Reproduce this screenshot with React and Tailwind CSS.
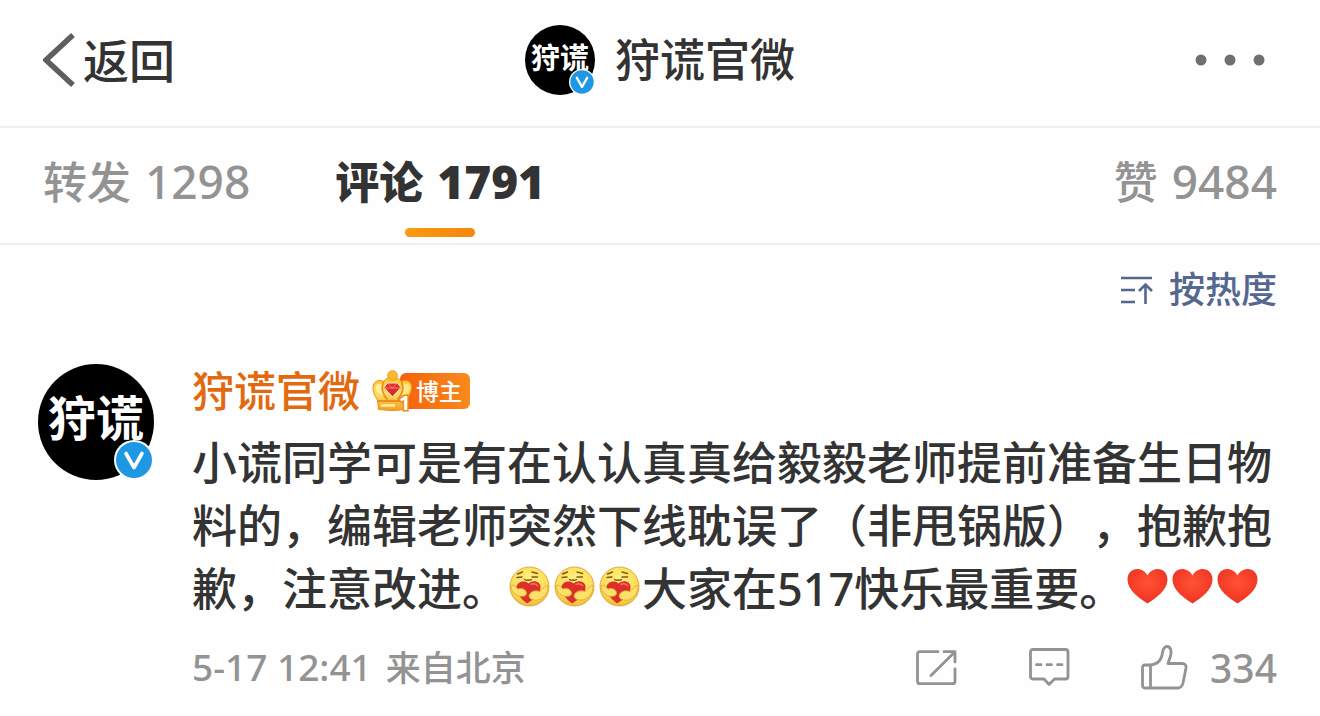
import { useState } from "react";

const sans = "font-['Noto_Sans','Noto_Sans_CJK_SC',sans-serif]";

function BackIcon() {
  return (
    <svg width="32" height="54" viewBox="0 0 32 54" fill="none" aria-hidden="true">
      <path d="M30 2 3 27l27 25" stroke="#5e5e5e" strokeWidth="5.500" />
    </svg>
  );
}

function MoreIcon() {
  return (
    <svg width="70" height="12" viewBox="0 0 70 12" fill="#6f6f6f" aria-hidden="true">
      <circle cx="6" cy="6" r="5.5" />
      <circle cx="35" cy="6" r="5.5" />
      <circle cx="64" cy="6" r="5.5" />
    </svg>
  );
}

function SortIcon() {
  return (
    <svg width="32" height="30" viewBox="0 0 32 30" fill="none" stroke="#53678f" strokeWidth="2.6" aria-hidden="true">
      <path d="M0 3h31M0 15h14M0 27h14M24.500 29V9.500M18 16l6.500-6.500L31 16" />
    </svg>
  );
}

function VerifiedIcon({ className }) {
  return (
    <svg viewBox="0 0 40 40" className={className} aria-hidden="true">
      <circle cx="20" cy="20" r="20" fill="#fff" />
      <circle cx="20" cy="20" r="18" fill="#1f98e4" />
      <path d="m12 13.500 8 14 8-14" fill="none" stroke="#fff" strokeWidth="3.600" strokeLinecap="round" strokeLinejoin="round" />
    </svg>
  );
}

function CrownIcon() {
  return (
    <svg width="40" height="42" viewBox="0 0 40 42" className="relative z-10 shrink-0 overflow-visible" aria-hidden="true">
      <defs>
        <linearGradient id="crown" x1="0" y1="0" x2="0" y2="1">
          <stop offset="0" stopColor="#ffc02e" />
          <stop offset="0.500" stopColor="#ffdc62" />
          <stop offset="1" stopColor="#f7a01c" />
        </linearGradient>
      </defs>
      <path
        d="M6.500 39.500 5.500 30C2 25 0 20 1.500 15c1-4 6-6 10-3.500C14 8 17 7.500 20.500 7.500S27 8 29.500 11.500c4-2.500 9-.5 10 3.500.5 4-1 8-4.500 15l-1 9.500q-13.500 2-27.500 0Z"
        fill="url(#crown)"
        stroke="#e8901c"
      />
      <path d="M11.500 11.500c-3 7-1 13 4 18M29.500 11.500c3 7 1 13-4 18M6 31h27" fill="none" stroke="#e98f1f" strokeWidth="1.800" />
      <path d="M3.500 18c0-4 4-5 6-3.500-1 4 0 8 2 11-4-1-7.500-4-8-7.500Z" fill="#fff0a0" />
      <path d="M37.500 18c0-4-4-5-6-3.500 1 4 0 8-2 11 4-1 7.500-4 8-7.500Z" fill="#ffe88a" />
      <circle cx="20.500" cy="5.500" r="4.800" fill="#ffb92a" stroke="#ee9c25" />
      <path d="M15.500 13h10l3.500 4.500-8.500 9.500-8.500-9.500Z" fill="#dc2d2d" stroke="#fff0c0" />
      <path d="m15.500 13 5 5 5-5M12.500 18h16" fill="none" stroke="#ff8a80" strokeWidth="0.800" />
      <path d="M9 35.500h14" stroke="#fff0a0" strokeWidth="2.500" />
      <text x="27" y="40" fontSize="20" fontWeight="700" fill="#fff" stroke="#ef8a1c" strokeWidth="3" paintOrder="stroke">1</text>
    </svg>
  );
}

function HugFace() {
  return (
    <svg viewBox="0 0 45 45" className="inline-block size-[45px] align-[-3px]" role="img" aria-label="抱抱">
      <defs>
        <radialGradient id="face" cx="0.5" cy="0.35" r="0.7">
          <stop offset="0" stopColor="#fff283" />
          <stop offset="0.700" stopColor="#fbdb52" />
          <stop offset="1" stopColor="#ecad30" />
        </radialGradient>
      </defs>
      <circle cx="22.500" cy="22.500" r="19.500" fill="url(#face)" stroke="#d69a30" strokeWidth="0.800" />
      <path d="m10.500 10 5-2M10 13.500l5-.5M25 8l5.500 1.500M25 13h5.500M17.500 15.500q2 1.500 3.500.3 1.500 1 3.500-.3" fill="none" stroke="#87551c" strokeWidth="1.400" strokeLinecap="round" />
      <path d="M20 39.500C15 36 11 31 9.500 25c-1-7 8-9.500 12-5.500 4-4 12.500-2.500 12 4C33.500 31 26 36 20 39.500Z" fill="#dd2f28" />
      <path d="M23.500 20.500q5-2 7.500 1.500" fill="none" stroke="#f47763" strokeWidth="1.500" />
      <path d="M4 22c3-2.500 4.500 1 7 3 4-1.500 8 .5 8.500 3.500.5 3.500-3.500 4.500-7.500 3.500C7.500 30.500 4 27 4 22Z" fill="#fce067" stroke="#e0a436" strokeWidth="0.800" />
      <path d="M41 21.500c-3 0-5 3.500-8 6-5-2-10 .5-11 4 0 4 4.500 5 9 4.500 6-2 10.500-7 10-14.500Z" fill="#fce067" stroke="#e0a436" strokeWidth="0.800" />
    </svg>
  );
}

function Heart() {
  return (
    <svg viewBox="0 0 45 45" className="inline-block size-[45px] align-[-3px]" role="img" aria-label="心">
      <defs>
        <radialGradient id="heart" cx="0.5" cy="0.4" r="0.65">
          <stop offset="0" stopColor="#ff5335" />
          <stop offset="0.700" stopColor="#f43a25" />
          <stop offset="1" stopColor="#d5382e" />
        </radialGradient>
      </defs>
      <path d="M23.500 39.500C15 34 3.500 26 3.500 15.500 3.500 3 18.500 1.500 23.500 11.500 28.500 1.500 43.500 3 43.500 15.500c0 10.500-11.500 18.500-20 24Z" fill="url(#heart)" />
    </svg>
  );
}

function ShareIcon() {
  return (
    <svg width="42" height="36" viewBox="0 0 42 36" fill="none" stroke="#939393" strokeWidth="2.800" strokeLinecap="round" strokeLinejoin="round" aria-hidden="true">
      <path d="M22 1.700H4q-2.500 0-2.500 2.500v27q0 2.500 2.500 2.500h32.500q2.500 0 2.500-2.500V19M28 1.700h11V12M39 1.700 15 25.500" />
    </svg>
  );
}

function CommentIcon() {
  return (
    <svg width="41" height="39" viewBox="0 0 41 39" fill="none" stroke="#939393" strokeWidth="2.800" strokeLinecap="round" strokeLinejoin="round" aria-hidden="true">
      <path d="M4 1.500h32.500q2.500 0 2.500 2.500v24.500q0 2.500-2.500 2.500h-11L20 36.500 15 31H4q-2.500 0-2.500-2.500V4Q1.500 1.500 4 1.500ZM7.500 16.700H12M18 16.700h4.500M28.500 16.700H33" />
    </svg>
  );
}

function LikeIcon() {
  return (
    <svg width="47" height="45" viewBox="0 0 47 45" fill="none" stroke="#939393" strokeWidth="2.800" strokeLinecap="round" strokeLinejoin="round" aria-hidden="true">
      <path d="M9.500 20H4q-2.500 0-2.500 2.500V40q0 3 2.500 3h5.500ZM9.500 20c6-.5 9.500-3.500 11-8 1.500-4 .5-10 5-10.500 4-.3 5 4 4.300 8-.5 3.500-2 5.500-2.800 9H41q4.500 0 4 4.500L42 38q-1.200 5-5.500 5h-27" />
    </svg>
  );
}

function Avatar({ large }) {
  return (
    <span
      className={
        large
          ? "relative flex size-[116px] shrink-0 items-center justify-center rounded-full bg-black pb-2 text-5xl font-bold text-white"
          : "relative flex size-[70px] shrink-0 items-center justify-center rounded-full bg-black pb-1 text-[29px] font-bold text-white"
      }
    >
      <span className="whitespace-nowrap">狩谎</span>
      <VerifiedIcon className={large ? "absolute right-0 bottom-0 size-10" : "absolute right-0 bottom-0 size-[26px]"} />
    </span>
  );
}

const tabs = [
  { id: "repost", label: "转发", count: 1298 },
  { id: "comment", label: "评论", count: 1791 },
  { id: "like", label: "赞", count: 9484 },
];

export default function App() {
  const [active, setActive] = useState("comment");

  return (
    <div className={`min-h-screen bg-[#fefefe] font-medium text-[#333] ${sans}`}>
      <header className="grid grid-cols-[1fr_auto_1fr] items-center border-b-2 border-[#eee] px-[43px] pt-[25px] pb-[31px]">
        <button type="button" className="flex items-center gap-2 justify-self-start text-[46px] leading-[60px]">
          <BackIcon />
          返回
        </button>
        <a href="#profile" className="flex items-center gap-5 text-[45px] leading-[64px]">
          <Avatar />
          狩谎官微
        </a>
        <button type="button" aria-label="更多" className="justify-self-end px-3 py-4">
          <MoreIcon />
        </button>
      </header>

      <nav className="flex gap-[85px] border-b-2 border-[#eee] px-[43px] pt-[21px] text-[44px] leading-[64px]">
        {tabs.map((t) => (
          <button
            key={t.id}
            type="button"
            onClick={() => setActive(t.id)}
            className={`flex flex-col items-center gap-[14px] pb-[6px] last:ml-auto ${active === t.id ? "font-black" : "text-[#939393]"}`}
          >
            <span className="flex items-baseline gap-[14px]">
              {t.label}
              <span className="text-[46px]">{t.count}</span>
            </span>
            <span className={`h-[9px] w-[70px] rounded-full ${active === t.id ? "bg-linear-to-r from-[#fb9a0c] to-[#f5860f]" : ""}`} />
          </button>
        ))}
      </nav>

      <main className="pr-[43px] pb-5 pl-[38px]">
        <div className="flex justify-end pt-[21px]">
          <button type="button" className="flex items-center gap-4 text-4xl leading-[48px] text-[#53678f]">
            <SortIcon />
            按热度
          </button>
        </div>

        <article className="mt-[50px] flex gap-[38px]">
          <div>
            <Avatar large />
          </div>
          <div className="min-w-0 flex-1">
            <div className="flex items-center gap-3 leading-[54px]">
              <a href="#profile" className="text-[42px] text-[#e3690f]">狩谎官微</a>
              <span className="flex items-center">
                <CrownIcon />
                <span className="-ml-3 h-9 rounded-md bg-linear-to-r from-[#f5600a] to-[#f98a1c] pr-2 pl-4 text-[23px] leading-9 text-white">
                  博主
                </span>
              </span>
            </div>

            <p className="mt-[13px] text-[45px] leading-[63px] [text-spacing-trim:space-all]">
              小谎同学可是有在认认真真给毅毅老师提前准备生日物料的，编辑老师突然下线耽误了（非甩锅版），抱歉抱歉，注意改进。
              <HugFace />
              <HugFace />
              <HugFace />
              大家在517快乐最重要。
              <Heart />
              <Heart />
              <Heart />
            </p>

            <footer className="mt-[23px] flex items-center justify-between leading-[48px] text-[#939393]">
              <span className="flex items-baseline gap-[14px] text-[35px]">
                <time className="text-[37px]">5-17 12:41</time>
                来自北京
              </span>
              <div className="flex items-center gap-[71px]">
                <button type="button" aria-label="转发">
                  <ShareIcon />
                </button>
                <button type="button" aria-label="评论">
                  <CommentIcon />
                </button>
                <button type="button" className="flex items-center gap-[22px] text-[39px]">
                  <LikeIcon />
                  334
                </button>
              </div>
            </footer>
          </div>
        </article>
      </main>
    </div>
  );
}
